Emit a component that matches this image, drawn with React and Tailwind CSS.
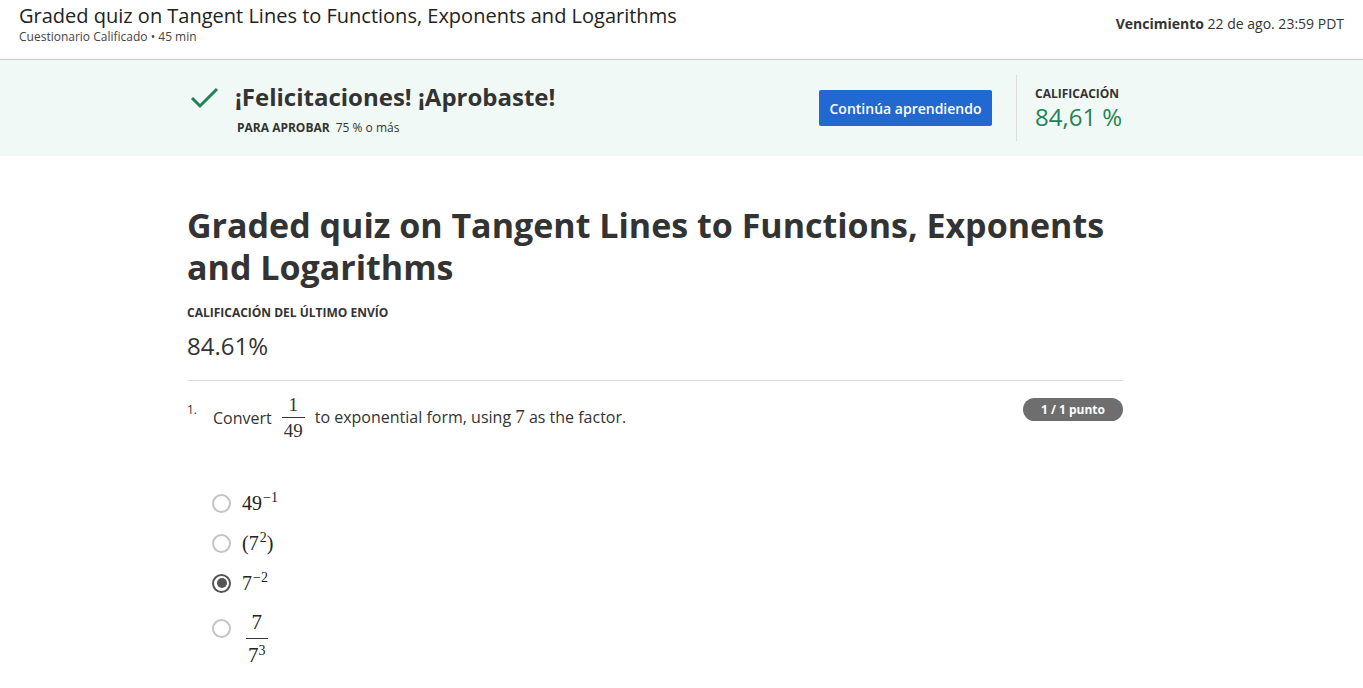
import React from 'react';

const sans = "font-['Open_Sans',sans-serif]";
const serif = "font-['Liberation_Serif',serif]";

function Frac({ top, bottom, className = '', gap = 'py-[3px]' }) {
  return (
    <span className={`inline-flex flex-col items-center align-middle ${serif} ${className}`}>
      <span className={`leading-none ${gap === 'wide' ? 'pb-[5px]' : 'pb-[3px]'}`}>{top}</span>
      <span className={`leading-none border-t border-[#333] px-[2px] ${gap === 'wide' ? 'pt-[6px]' : 'pt-[3px]'}`}>{bottom}</span>
    </span>
  );
}

function Sup({ children }) {
  return <sup className="text-[14px] relative top-[-8px] ml-[1px]">{children}</sup>;
}

function Radio({ checked }) {
  return (
    <span className="w-[19px] h-[19px] rounded-full border-2 border-[#c4c4c4] flex items-center justify-center shrink-0 data-[on=true]:border-[#555]" data-on={checked}>
      {checked && <span className="w-[10px] h-[10px] rounded-full bg-[#555]" />}
    </span>
  );
}

function Option({ checked, children, tall }) {
  return (
    <div className={`flex items-center gap-[11px] ${tall ? 'h-[50px]' : 'h-[40px]'}`}>
      <Radio checked={checked} />
      <span className={`${serif} text-[20px] text-[#222]`}>{children}</span>
    </div>
  );
}

export default function App() {
  return (
    <div className={`${sans} bg-white text-[#333] min-h-[688px]`}>
      {/* Top header */}
      <header className="h-[60px] border-b border-[#c8c8c8] flex justify-between px-[19px]">
        <div className="pt-[3px]">
          <h1 className="text-[20px] leading-[26px] text-[#222]">
            Graded quiz on Tangent Lines to Functions, Exponents and Logarithms
          </h1>
          <p className="text-[12px] leading-[16px] text-[#444]">Cuestionario Calificado • 45 min</p>
        </div>
        <div className="pt-[13px] text-[14px] text-[#333]">
          <span className="font-bold">Vencimiento</span> 22 de ago. 23:59 PDT
        </div>
      </header>

      {/* Passed banner */}
      <section className="bg-[#f0f9f6] h-[96px]">
        <div className="w-[936px] ml-[187px] h-full flex items-center">
          <div className="flex items-start flex-1 pt-[2px]">
            <svg width="30" height="24" viewBox="0 0 30 24" className="ml-[3px] mt-[4px]">
              <path d="M2 12 L10 20 L27 3" fill="none" stroke="#1f8354" strokeWidth="3" />
            </svg>
            <div className="ml-[15px]">
              <div className="text-[24px] font-bold leading-[30px] text-[#333]">¡Felicitaciones! ¡Aprobaste!</div>
              <div className="text-[12px] leading-[18px] mt-[7px] ml-[2px] text-[#333]">
                <span className="font-bold">PARA APROBAR</span>
                <span className="ml-[6px]">75 % o más</span>
              </div>
            </div>
          </div>
          <button className="w-[173px] h-[36px] bg-[#2169d1] rounded-[2px] text-white text-[14px] font-semibold mr-[24px]">
            Continúa aprendiendo
          </button>
          <div className="w-px h-[66px] bg-[#dcdcdc]" />
          <div className="pl-[18px] w-[106px] pt-[2px]">
            <div className="text-[12px] font-bold leading-[16px] text-[#333]">CALIFICACIÓN</div>
            <div className="text-[24px] leading-[30px] text-[#1f8354]">84,61 %</div>
          </div>
        </div>
      </section>

      {/* Main content */}
      <main className="w-[936px] ml-[187px] pt-[48px]">
        <h2 className="text-[34px] font-bold leading-[42px] text-[#333]">
          Graded quiz on Tangent Lines to Functions, Exponents and Logarithms
        </h2>
        <div className="mt-[17px] text-[12px] font-bold leading-[16px] text-[#333]">CALIFICACIÓN DEL ÚLTIMO ENVÍO</div>
        <div className="text-[24px] leading-[30px] mt-[10px] text-[#333]">84.61%</div>
        <div className="border-t border-[#ddd] mt-[19px]" />

        <div className="flex justify-between pt-[17px]">
          <div className="flex">
            <span className="text-[12px] leading-[16px] w-[26px] pt-[4px]">1.</span>
            <div className="flex items-center text-[16px] text-[#333] mt-[-3px]">
              <span>Convert</span>
              <Frac top="1" bottom="49" className="text-[19px] mx-[10px]" />
              <span>to exponential form, using <span className={`${serif} text-[19px]`}>7</span> as the factor.</span>
            </div>
          </div>
          <span className="h-[23px] w-[100px] rounded-full bg-[#6e6e6e] text-white text-[12px] font-bold flex items-center justify-center">
            1 / 1 punto
          </span>
        </div>

        <div className="mt-[43px] ml-[25px]">
          <Option>49<Sup>−1</Sup></Option>
          <Option>(7<Sup>2</Sup>)</Option>
          <Option checked>7<Sup>−2</Sup></Option>
          <Option tall>
            <Frac
              top="7"
              bottom={<span>7<sup className="text-[14px] relative top-[-7px]">3</sup></span>}
              gap="wide"
              className="text-[21px] ml-[4px] mt-[22px]"
            />
          </Option>
        </div>
      </main>
    </div>
  );
}
